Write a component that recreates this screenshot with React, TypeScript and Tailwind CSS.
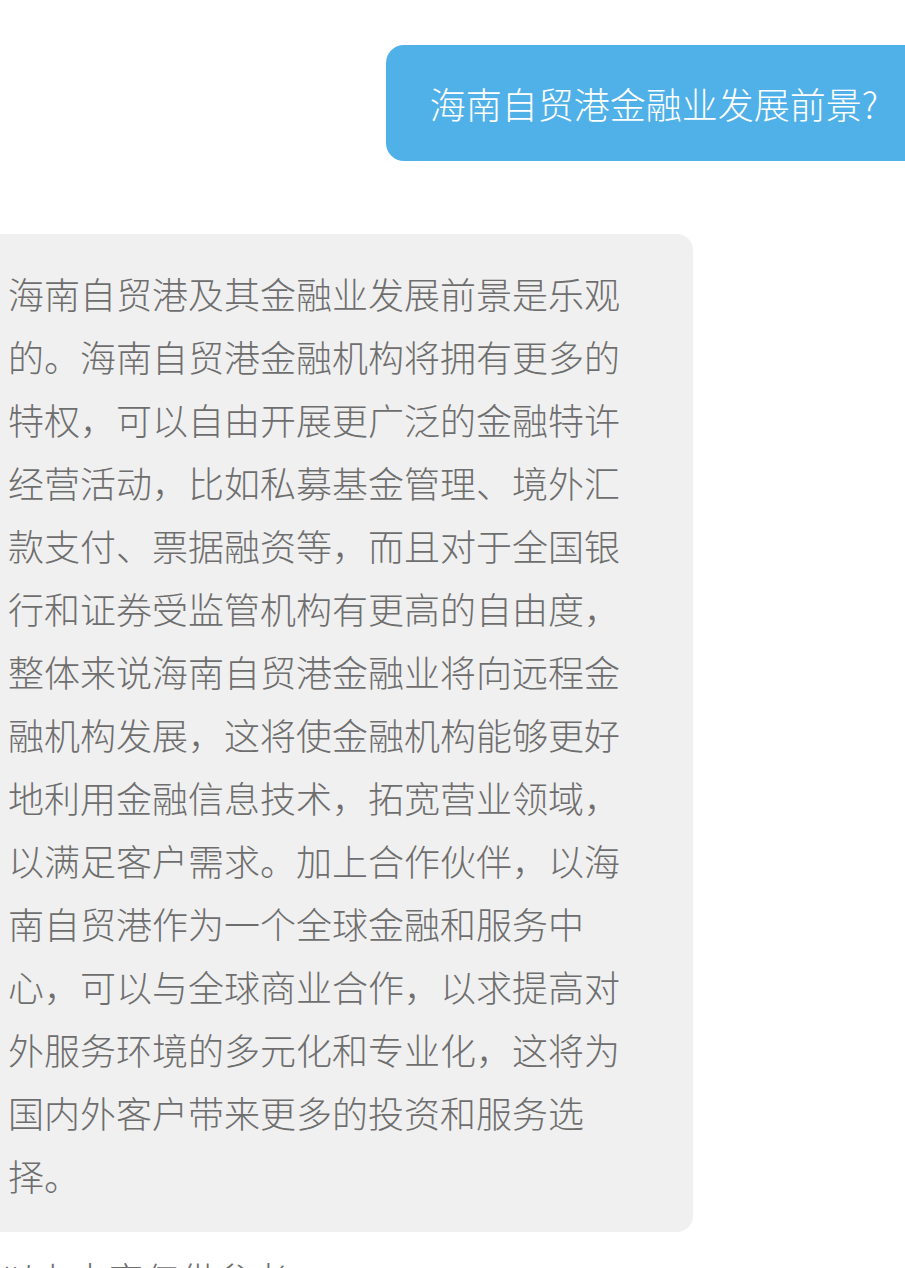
/* Chat transcript — user question + assistant answer */

const answer =
  '海南自贸港及其金融业发展前景是乐观的。海南自贸港金融机构将拥有更多的特权，可以自由开展更广泛的金融特许经营活动，比如私募基金管理、境外汇款支付、票据融资等，而且对于全国银行和证券受监管机构有更高的自由度，整体来说海南自贸港金融业将向远程金融机构发展，这将使金融机构能够更好地利用金融信息技术，拓宽营业领域，以满足客户需求。加上合作伙伴，以海南自贸港作为一个全球金融和服务中心，可以与全球商业合作，以求提高对外服务环境的多元化和专业化，这将为国内外客户带来更多的投资和服务选择。';

export default function App() {
  return (
    <div
      className="min-h-[1268px] w-full overflow-hidden bg-white"
      style={{ fontFamily: '"Noto Sans CJK SC", "Noto Sans", sans-serif' }}
    >
      {/* User message */}
      <div className="flex justify-end pt-[45px]">
        <div className="-mr-[17px] rounded-[18px] bg-[#50b1e9] py-[40px] pl-[44px] pr-[44px] text-[36px] font-light leading-[36px] text-white">
          海南自贸港金融业发展前景?
        </div>
      </div>

      {/* Assistant answer */}
      <div className="mt-[73px] flex">
        <div className="-ml-[22px] w-[715px] rounded-[16px] bg-[#f0f0f0] pb-[25px] pl-[30px] pr-[55px] pt-[28px]">
          <p className="w-[630px] text-[36px] font-light leading-[63px] text-[#6e6e6e]">{answer}</p>
        </div>
      </div>

      {/* Footer note, cut off by the viewport */}
      <p className="mt-[15px] text-[36px] font-light leading-[63px] text-[#6e6e6e]">以上内容仅供参考</p>
    </div>
  );
}
